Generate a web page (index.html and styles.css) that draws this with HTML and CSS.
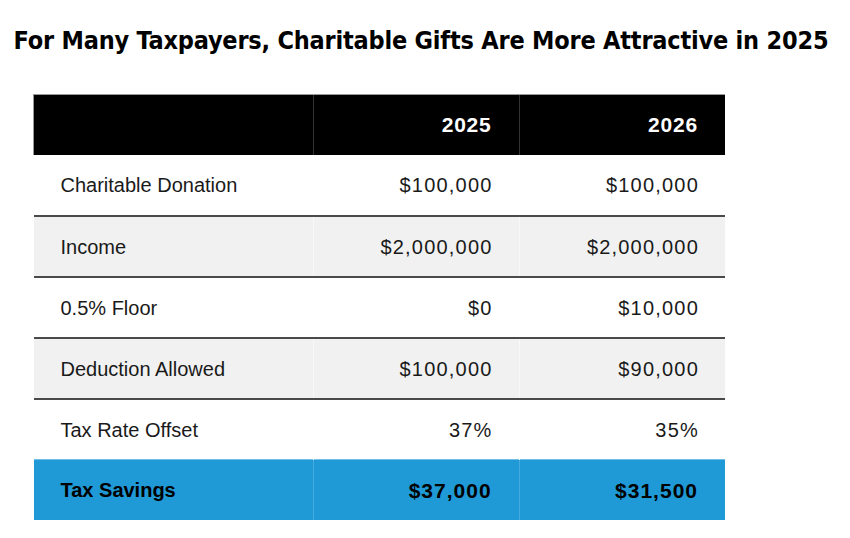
FILE: index.html
```html
<!DOCTYPE html>
<html>
<head>
<meta charset="utf-8">
<link rel="stylesheet" href="styles.css">
</head>
<body>
<h1 class="title">For Many Taxpayers, Charitable Gifts Are More Attractive in 2025</h1>
<table class="tax">
  <thead>
    <tr><th class="label"></th><th class="num">2025</th><th class="num">2026</th></tr>
  </thead>
  <tbody>
    <tr class="odd"><td class="label">Charitable Donation</td><td class="num">$100,000</td><td class="num">$100,000</td></tr>
    <tr class="even"><td class="label">Income</td><td class="num">$2,000,000</td><td class="num">$2,000,000</td></tr>
    <tr class="odd"><td class="label">0.5% Floor</td><td class="num">$0</td><td class="num">$10,000</td></tr>
    <tr class="even"><td class="label">Deduction Allowed</td><td class="num">$100,000</td><td class="num">$90,000</td></tr>
    <tr class="odd"><td class="label">Tax Rate Offset</td><td class="num">37%</td><td class="num">35%</td></tr>
    <tr class="total"><td class="label">Tax Savings</td><td class="num">$37,000</td><td class="num">$31,500</td></tr>
  </tbody>
</table>
</body>
</html>
```
FILE: styles.css
```css
html, body { margin: 0; padding: 0; background: #fff; }
body { width: 850px; height: 538px; overflow: hidden; }
.title {
  margin: 0;
  padding-top: 25px;
  height: 71px;
  box-sizing: border-box;
  text-align: center;
  font-family: "DejaVu Sans Condensed", "DejaVu Sans", sans-serif;
  font-stretch: condensed;
  font-weight: bold;
  font-size: 25px;
  line-height: 32px;
  color: #000;
  letter-spacing: -0.2px;
  padding-right: 8px;
}
.tax {
  margin-left: 33px;
  margin-top: 23px;
  border-collapse: collapse;
  width: 692px;
  font-family: "Liberation Sans", Arial, sans-serif;
  font-size: 20px;
  color: #1a1a1a;
}
.tax th, .tax td {
  padding: 2px 27px 0;
  text-align: right;
  height: 61px;
  box-sizing: border-box;
}
.tax .num { letter-spacing: 1.2px; padding-right: 26px; }
.tax th.label, .tax td.label { text-align: left; width: 280px; }
.tax th { width: 206px; }
.tax thead tr { background: #000; color: #fff; }
.tax th {
  font-weight: bold;
  border-left: 1px solid #333;
  border-top: 1px solid #999;
  height: 60px;
  padding-top: 0;
}
.tax th.num { font-size: 21px; letter-spacing: 0.8px; padding-right: 27px; }
.tax th:first-child { border-left: 1px solid #999; }
.tax tbody tr { border-top: 2px solid #4a4a4a; }
.tax tbody tr:first-child { border-top: none; }
.tax tbody td { border-left: 1px solid rgba(255,255,255,0.5); }
.tax tbody td:first-child { border-left: none; }
.tax tr.odd { background: #fff; }
.tax tr.even { background: #f1f1f1; }
.tax tr.total { background: #1f9ad6; border-top: none; font-weight: bold; color: #000; }
.tax tr.total td { border-left: 1px solid #45ace0; border-top: 1px solid #6fbfe6; height: 60px; }
.tax tr.total td.num { font-size: 21px; letter-spacing: 1px; padding-right: 27px; }
.tax tr.total td:first-child { border-left: none; }
```
